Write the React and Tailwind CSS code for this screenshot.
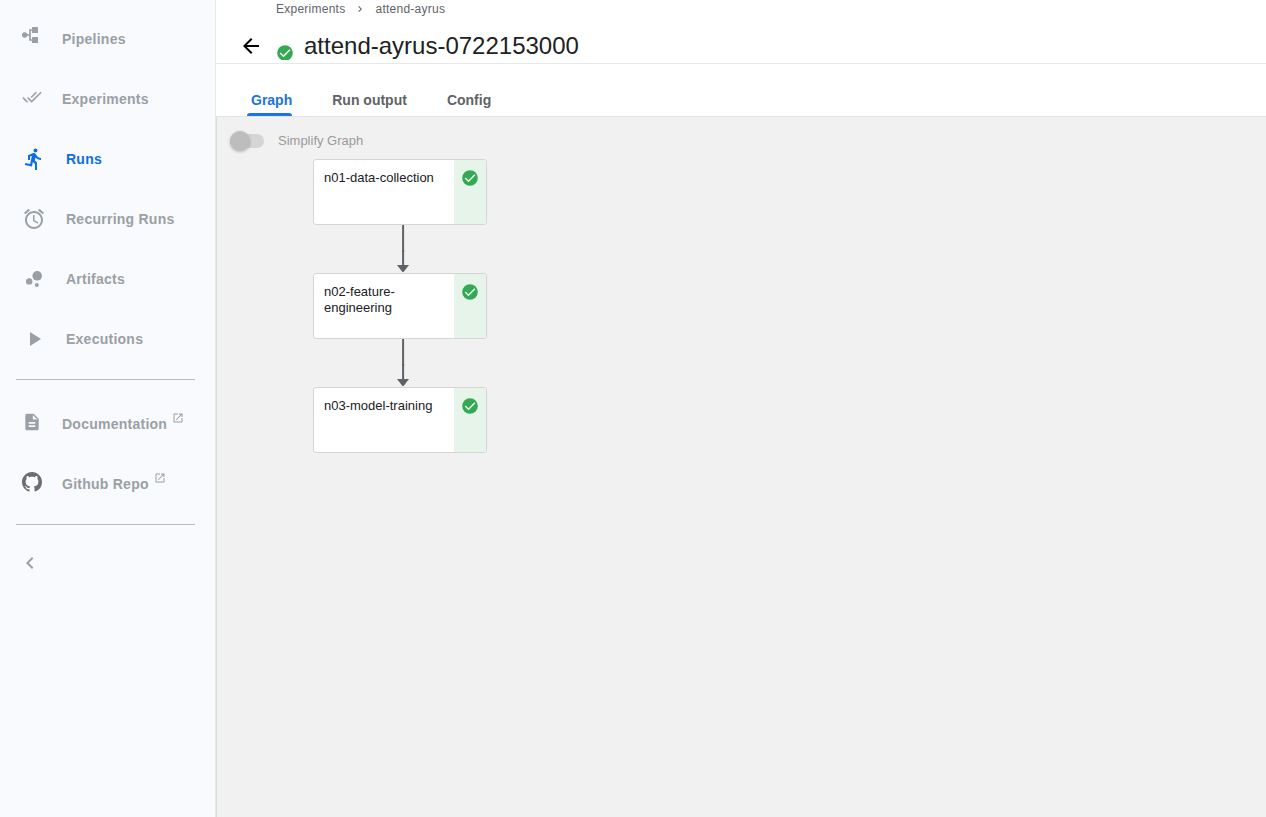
const Svg = ({ size, d, className = "", children }) => (
  <svg width={size} height={size} viewBox="0 0 24 24" fill="currentColor" className={`shrink-0 ${className}`}>
    {d ? <path d={d} /> : children}
  </svg>
);

const PATHS = {
  doneAll:
    "M18 7l-1.41-1.41-6.34 6.34 1.41 1.41L18 7zm4.24-1.41L11.66 16.17 7.48 12l-1.41 1.41L11.66 19l12-12-1.42-1.41zM.41 13.41L6 19l1.41-1.41L1.83 12 .41 13.41z",
  run: "M13.49 5.48c1.1 0 2-.9 2-2s-.9-2-2-2-2 .9-2 2 .9 2 2 2zm-3.6 13.9l1-4.4 2.1 2v6h2v-7.5l-2.1-2 .6-3c1.3 1.5 3.3 2.5 5.5 2.5v-2c-1.9 0-3.5-1-4.3-2.4l-1-1.6c-.4-.6-1-1-1.7-1-.3 0-.5.1-.8.1l-5.2 2.2v4.7h2v-3.4l1.8-.7-1.6 8.1-4.9-1-.4 2 7 1.4z",
  alarm:
    "M22 5.72l-4.6-3.86-1.29 1.53 4.6 3.86L22 5.72zM7.88 3.39L6.6 1.86 2 5.71l1.29 1.53 4.59-3.85zM12.5 8H11v6l4.75 2.85.75-1.23-4-2.37V8zM12 4c-4.97 0-9 4.03-9 9s4.02 9 9 9c4.97 0 9-4.03 9-9s-4.03-9-9-9zm0 16c-3.87 0-7-3.13-7-7s3.13-7 7-7 7 3.13 7 7-3.13 7-7 7z",
  play: "M8 5v14l11-7z",
  doc: "M14 2H6c-1.1 0-1.99.9-1.99 2L4 20c0 1.1.89 2 1.99 2H18c1.1 0 2-.9 2-2V8l-6-6zm2 16H8v-2h8v2zm0-4H8v-2h8v2zm-3-5V3.5L18.5 9H13z",
  open: "M19 19H5V5h7V3H5c-1.11 0-2 .9-2 2v14c0 1.1.89 2 2 2h14c1.1 0 2-.9 2-2v-7h-2v7zM14 3v2h3.59l-9.83 9.83 1.41 1.41L19 6.41V10h2V3h-7z",
  left: "M15.41 7.41L14 6l-6 6 6 6 1.41-1.41L10.83 12z",
  right: "M10 6L8.59 7.41 13.17 12l-4.58 4.59L10 18l6-6z",
  back: "M20 11H7.83l5.59-5.59L12 4l-8 8 8 8 1.41-1.41L7.83 13H20v-2z",
};

const PipelinesIcon = () => (
  <svg width="20" height="20" viewBox="0 0 20 20" fill="currentColor" className="shrink-0">
    <circle cx="2.7" cy="10" r="2.7" />
    <rect x="10" y="2" width="6" height="6" rx="0.3" />
    <rect x="10" y="12" width="6" height="6" rx="0.3" />
    <path d="M3 10H8M11 5H8V15H11" fill="none" stroke="currentColor" strokeWidth="1.7" />
  </svg>
);

const GithubIcon = () => (
  <svg width="20" height="20" viewBox="0 0 16 16" className="shrink-0 text-[#6c6d6e]" fill="currentColor">
    <path d="M8 0C3.58 0 0 3.58 0 8c0 3.54 2.29 6.53 5.47 7.59.4.07.55-.17.55-.38 0-.19-.01-.82-.01-1.49-2.01.37-2.53-.49-2.69-.94-.09-.23-.48-.94-.82-1.13-.28-.15-.68-.52-.01-.53.63-.01 1.08.58 1.23.82.72 1.21 1.87.87 2.33.66.07-.52.28-.87.51-1.07-1.78-.2-3.64-.89-3.64-3.95 0-.87.31-1.59.82-2.15-.08-.2-.36-1.02.08-2.12 0 0 .67-.21 2.2.82.64-.18 1.32-.27 2-.27s1.36.09 2 .27c1.53-1.04 2.2-.82 2.2-.82.44 1.1.16 1.92.08 2.12.51.56.82 1.27.82 2.15 0 3.07-1.87 3.75-3.65 3.95.29.25.54.73.54 1.48 0 1.07-.01 1.93-.01 2.2 0 .21.15.46.55.38A8.01 8.01 0 0 0 16 8c0-4.42-3.58-8-8-8z" />
  </svg>
);

const BubbleIcon = () => (
  <Svg size={24}>
    <circle cx="7.2" cy="14.4" r="3.2" />
    <circle cx="14.8" cy="18" r="2" />
    <circle cx="15.2" cy="8.8" r="4.8" />
  </Svg>
);

const CheckIcon = ({ mark }) => (
  <svg width="18" height="18" viewBox="0 0 18 18" className="shrink-0">
    <circle cx="9" cy="9" r="7.8" fill="#34a853" />
    <path d="M4.2 9L7.5 12.2L13.9 5.8" fill="none" stroke={mark} strokeWidth="1.5" />
  </svg>
);

// Small icons sit slightly above the label's centre line.
const NavItem = ({ icon, label, small, active, external }) => (
  <a
    className={`flex h-[60px] items-center pl-[22px] text-[14px] font-bold tracking-[0.25px] ${
      active ? "text-[#0d6de7]" : "text-[#9aa0a6]"
    }`}
  >
    <span className={small ? "mr-5 pb-1" : "mr-5"}>{icon}</span>
    <span>{label}</span>
    {external && <Svg size={12} d={PATHS.open} className="mb-3 ml-[5px]" />}
  </a>
);

const Node = ({ name }) => (
  <div className="flex h-[66px] w-[174px] overflow-hidden rounded-[3px] border border-[#d5d5d5] bg-white">
    <div className="flex-1 px-[10px] pt-[10px] text-[13px] leading-4 text-[#202124]">{name}</div>
    <div className="flex w-8 justify-center bg-[#e6f4ea] pt-[9px]">
      <CheckIcon mark="#e6f4ea" />
    </div>
  </div>
);

const Edge = () => (
  <svg width="12" height="48" viewBox="0 0 12 48" className="ml-[84px] block">
    <path d="M6.1 0V41" stroke="#5f6368" strokeWidth="2" />
    <circle cx="6.1" cy="26" r="1.2" fill="#5f6368" />
    <path d="M0 40H12L7 46.5Q6 47.5 5 46.5Z" fill="#5f6368" />
  </svg>
);

const Rule = () => <div className="ml-4 h-px w-[179px] bg-[#b8bbc1]" />;

export default function App() {
  return (
    <div className="flex h-[817px] w-[1266px] overflow-hidden bg-white font-['Liberation_Sans',Arial,sans-serif]">
      <aside className="w-[216px] shrink-0 border-r border-[#e4e7eb] bg-[#f8fafd]">
        <nav className="flex flex-col pt-[9px]">
          <NavItem small label="Pipelines" icon={<div className="pb-1"><PipelinesIcon /></div>} />
          <NavItem small label="Experiments" icon={<Svg size={20} d={PATHS.doneAll} />} />
          <NavItem active label="Runs" icon={<Svg size={24} d={PATHS.run} />} />
          <NavItem label="Recurring Runs" icon={<Svg size={24} d={PATHS.alarm} />} />
          <NavItem label="Artifacts" icon={<BubbleIcon />} />
          <NavItem label="Executions" icon={<Svg size={24} d={PATHS.play} />} />
        </nav>
        <div className="pt-[10px]">
          <Rule />
        </div>
        <nav className="flex flex-col pt-[14px] pb-[10px]">
          <NavItem small external label="Documentation" icon={<Svg size={20} d={PATHS.doc} />} />
          <NavItem small external label="Github Repo" icon={<GithubIcon />} />
        </nav>
        <Rule />
        <button className="mt-[26px] ml-[18px] block text-[#9aa0a6]">
          <Svg size={24} d={PATHS.left} />
        </button>
      </aside>

      <main className="flex flex-1 flex-col">
        <header className="flex h-16 flex-col border-b border-[#e8eaed]">
          <div className="flex h-[18px] items-center pl-[60px] text-[12px] tracking-[0.25px] text-[#5f6368]">
            <span>Experiments</span>
            <Svg size={12} d={PATHS.right} className="mx-[9px]" />
            <span>attend-ayrus</span>
          </div>
          <div className="flex h-[42px] items-start pl-[23px] pt-4">
            <Svg size={24} d={PATHS.back} className="text-black" />
            <span className="mt-[10px] ml-[13px] h-4 overflow-hidden">
              <CheckIcon mark="#fff" />
            </span>
            <h1 className="ml-[10px] text-[24px] leading-6 text-[#202124]">attend-ayrus-0722153000</h1>
          </div>
        </header>
        <div className="flex h-[53px] items-end gap-10 border-b border-[#e4e4e4] pl-[35px] text-[14px] font-bold text-[#5f6368]">
          <div className="relative h-[27px] leading-[22px] text-[#1a73e8]">
            Graph
            <span className="absolute bottom-0 -left-[4.5px] h-[3px] w-[45px] rounded-t-[3px] bg-[#1a73e8]" />
          </div>
          <div className="h-[27px] leading-[22px]">Run output</div>
          <div className="h-[27px] leading-[22px]">Config</div>
        </div>
        <section className="flex-1 border-l border-[#dcdcdc] bg-[#f1f1f1]">
          <div className="flex h-[42px] items-center pl-[13px] pt-[5px]">
            <div className="flex h-[14px] w-[34px] items-center rounded-full bg-[#d5d5d5]">
              <div className="h-5 w-5 shrink-0 rounded-full bg-[#bdbdbd] shadow-[0_1px_3px_rgba(0,0,0,0.25)]" />
            </div>
            <span className="ml-[14px] text-[13px] text-[#9a9a9a]">Simplify Graph</span>
          </div>
          <div className="flex flex-col pl-24">
            <Node name="n01-data-collection" />
            <Edge />
            <Node name="n02-feature-engineering" />
            <Edge />
            <Node name="n03-model-training" />
          </div>
        </section>
      </main>
    </div>
  );
}
